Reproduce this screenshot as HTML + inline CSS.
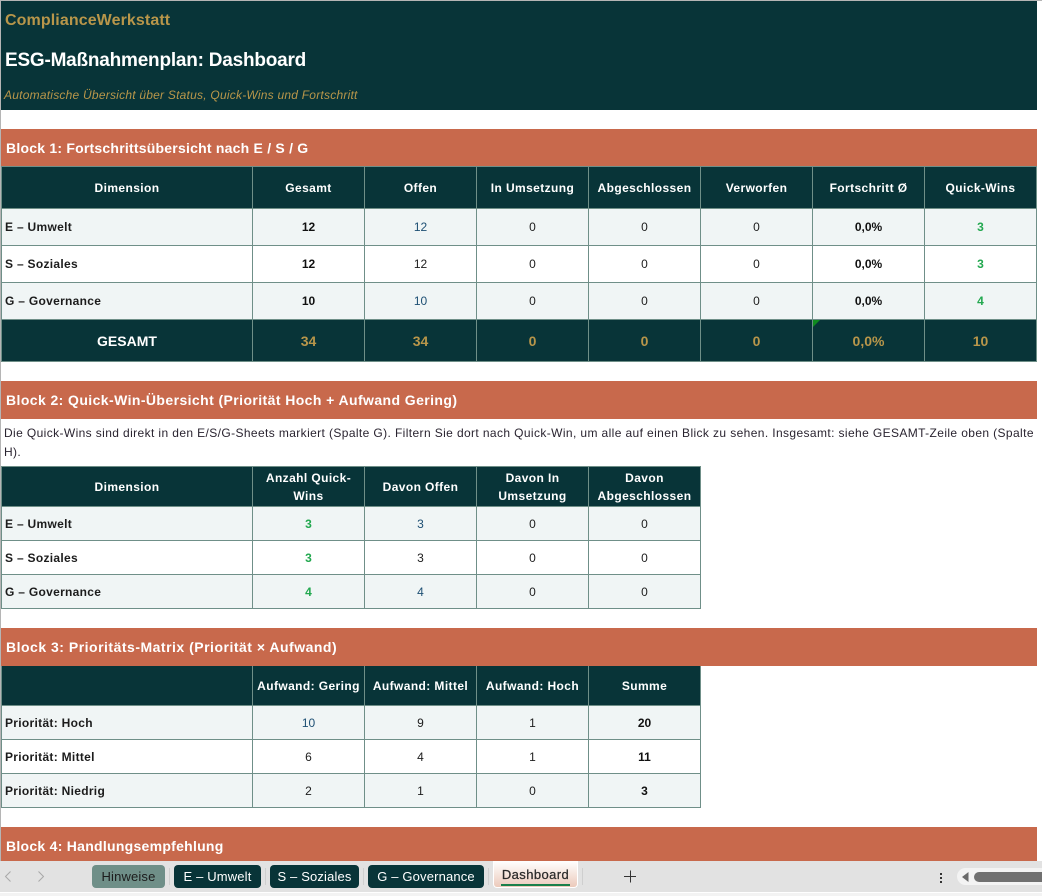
<!DOCTYPE html>
<html lang="de">
<head>
<meta charset="utf-8">
<title>ESG-Maßnahmenplan: Dashboard</title>
<style>
*{box-sizing:border-box}
html,body{margin:0;padding:0;width:1042px;height:896px;overflow:hidden;background:#fff}
body{position:relative;font-family:"Liberation Sans",Arial,sans-serif;color:#1c1c1c;font-size:12px}
.abs{position:absolute;white-space:nowrap}
.bar{position:absolute;left:1px;width:1036px;background:#c8694c;color:#fff;font-weight:bold;font-size:14px;padding-left:5px;display:flex;align-items:center;white-space:nowrap}
.t{position:absolute;left:1px;display:grid;gap:1px;padding:1px;background:#6f8f88}
.w8{grid-template-columns:250px repeat(7,111px);width:1036px}
.w5{grid-template-columns:250px repeat(4,111px);width:700px}
.t>div{display:flex;align-items:center;justify-content:center;text-align:center;background:#fff;line-height:18px;white-space:nowrap}
.t>.h{background:#083438;color:#fff;font-weight:bold;letter-spacing:.4px}
.t>.a{background:#f0f5f5}
.t>.l{justify-content:flex-start;padding-left:3px;font-weight:bold;letter-spacing:.3px}
.t>.b{font-weight:bold;color:#111}
.t>.g{font-weight:bold;color:#22a84f}
.t>.o{color:#1d4f73}
.t>.f{background:#083438;color:#b8964a;font-weight:bold;font-size:14px;position:relative}
.t>.fl{background:#083438;color:#fff;font-weight:bold;font-size:14px}
.tab{position:absolute;top:865px;height:23px;border-radius:4px;background:#083438;color:#fff;font-size:13px;letter-spacing:.15px;display:flex;align-items:center;justify-content:center;white-space:nowrap}
.sep{position:absolute;top:868px;width:1px;height:17px;background:#cfcfcf}
</style>
</head>
<body>
<div class="abs" style="left:0;top:0;width:1042px;height:1px;background:#b5b5b5"></div>
<div class="abs" style="left:0;top:0;width:1px;height:861px;background:#b5b5b5"></div>

<div class="abs" style="left:1px;top:1px;width:1036px;height:109px;background:#083438"></div>
<div class="abs" style="left:5px;top:11px;font-size:16px;font-weight:bold;color:#b8964a;line-height:20px;letter-spacing:.1px">ComplianceWerkstatt</div>
<div class="abs" style="left:5px;top:49px;font-size:19px;font-weight:bold;color:#fff;line-height:24px;letter-spacing:-.22px">ESG-Maßnahmenplan: Dashboard</div>
<div class="abs" style="left:4px;top:86px;font-size:12px;font-style:italic;color:#b8964a;line-height:18px;letter-spacing:.23px">Automatische Übersicht über Status, Quick-Wins und Fortschritt</div>

<div class="bar" style="top:129px;height:37px;letter-spacing:.22px">Block 1: Fortschrittsübersicht nach E / S / G</div>
<div class="t w8" style="top:166px;grid-template-rows:41px 36px 36px 36px 41px">
<div class="h">Dimension</div><div class="h">Gesamt</div><div class="h">Offen</div><div class="h">In Umsetzung</div><div class="h">Abgeschlossen</div><div class="h">Verworfen</div><div class="h">Fortschritt Ø</div><div class="h">Quick-Wins</div>
<div class="a l">E – Umwelt</div><div class="a b">12</div><div class="a o">12</div><div class="a">0</div><div class="a">0</div><div class="a">0</div><div class="a b">0,0%</div><div class="a g">3</div>
<div class="l">S – Soziales</div><div class="b">12</div><div>12</div><div>0</div><div>0</div><div>0</div><div class="b">0,0%</div><div class="g">3</div>
<div class="a l">G – Governance</div><div class="a b">10</div><div class="a o">10</div><div class="a">0</div><div class="a">0</div><div class="a">0</div><div class="a b">0,0%</div><div class="a g">4</div>
<div class="fl">GESAMT</div><div class="f">34</div><div class="f">34</div><div class="f">0</div><div class="f">0</div><div class="f">0</div><div class="f">0,0%<svg width="7" height="7" style="position:absolute;left:0;top:0"><path d="M0 0H7L0 7Z" fill="#0f8a1f"/></svg></div><div class="f">10</div>
</div>

<div class="bar" style="top:381px;height:38px;letter-spacing:.41px">Block 2: Quick-Win-Übersicht (Priorität Hoch + Aufwand Gering)</div>
<div class="abs" style="left:4px;top:424px;line-height:19px;letter-spacing:.385px;color:#2a2430">Die Quick-Wins sind direkt in den E/S/G-Sheets markiert (Spalte G). Filtern Sie dort nach Quick-Win, um alle auf einen Blick zu sehen. Insgesamt: siehe GESAMT-Zeile oben (Spalte<br>H).</div>
<div class="t w5" style="top:466px;grid-template-rows:39px 33px 33px 33px">
<div class="h">Dimension</div><div class="h">Anzahl Quick-<br>Wins</div><div class="h">Davon Offen</div><div class="h">Davon In<br>Umsetzung</div><div class="h">Davon<br>Abgeschlossen</div>
<div class="a l">E – Umwelt</div><div class="a g">3</div><div class="a o">3</div><div class="a">0</div><div class="a">0</div>
<div class="l">S – Soziales</div><div class="g">3</div><div>3</div><div>0</div><div>0</div>
<div class="a l">G – Governance</div><div class="a g">4</div><div class="a o">4</div><div class="a">0</div><div class="a">0</div>
</div>

<div class="bar" style="top:628px;height:38px;letter-spacing:.5px">Block 3: Prioritäts-Matrix (Priorität × Aufwand)</div>
<div class="t w5" style="top:666px;grid-template-rows:39px 33px 33px 33px;padding-top:0">
<div class="h"></div><div class="h">Aufwand: Gering</div><div class="h">Aufwand: Mittel</div><div class="h">Aufwand: Hoch</div><div class="h">Summe</div>
<div class="a l">Priorität: Hoch</div><div class="a o">10</div><div class="a">9</div><div class="a">1</div><div class="a b">20</div>
<div class="l">Priorität: Mittel</div><div>6</div><div>4</div><div>1</div><div class="b">11</div>
<div class="a l">Priorität: Niedrig</div><div class="a">2</div><div class="a">1</div><div class="a">0</div><div class="a b">3</div>
</div>

<div class="bar" style="top:827px;height:34px;padding-top:4px;letter-spacing:.27px">Block 4: Handlungsempfehlung</div>

<div class="abs" style="left:0;top:861px;width:1042px;height:31px;background:#e2e2e2"></div>
<div class="abs" style="left:0;top:892px;width:1042px;height:1px;background:#fff"></div>
<div class="abs" style="left:0;top:893px;width:1042px;height:3px;background:#f3f3f3"></div>

<svg class="abs" style="left:0;top:861px" width="60" height="31" fill="none" stroke="#a8a8a8" stroke-width="1"><path d="M10.5 10.5L5.5 15.5L10.5 20.5"/><path d="M38.5 10.5L43.5 15.5L38.5 20.5"/></svg>

<div class="tab" style="left:92px;width:73px;background:#6f8f88;color:#1c1c1c">Hinweise</div>
<div class="sep" style="left:169px"></div>
<div class="tab" style="left:174px;width:87px">E – Umwelt</div>
<div class="sep" style="left:265px"></div>
<div class="tab" style="left:270px;width:89px">S – Soziales</div>
<div class="sep" style="left:363px"></div>
<div class="tab" style="left:368px;width:116px">G – Governance</div>
<div class="sep" style="left:488px"></div>
<div class="abs" style="left:493px;top:861px;width:85px;height:27px;border-radius:0 0 4px 4px;border:1px solid #fff;border-top:0;background:linear-gradient(#fff,#eccabb);color:#2a2a2a;font-size:13px;text-align:center;line-height:27px;letter-spacing:.4px;-webkit-text-stroke:.25px #2a2a2a">Dashboard</div>
<div class="abs" style="left:501px;top:884px;width:69px;height:2px;background:#1a7f4b"></div>
<div class="sep" style="left:582px"></div>

<svg class="abs" style="left:624px;top:870px" width="13" height="13" stroke="#333" stroke-width="1"><path d="M0 6.5H12M6.5 0.5V12.5"/></svg>

<div class="abs" style="left:940px;top:873px;width:2px;height:2px;background:#333"></div>
<div class="abs" style="left:940px;top:877px;width:2px;height:2px;background:#333"></div>
<div class="abs" style="left:940px;top:881px;width:2px;height:2px;background:#333"></div>

<div class="abs" style="left:957px;top:868px;width:85px;height:17px;border-radius:9px 0 0 9px;background:#f3f3f3"></div>
<svg class="abs" style="left:962px;top:872px" width="7" height="10"><path d="M6.5 0V10L0 5Z" fill="#6a6a6a"/></svg>
<div class="abs" style="left:974px;top:872px;width:68px;height:10px;border-radius:5px 0 0 5px;background:#707070"></div>
</body>
</html>
